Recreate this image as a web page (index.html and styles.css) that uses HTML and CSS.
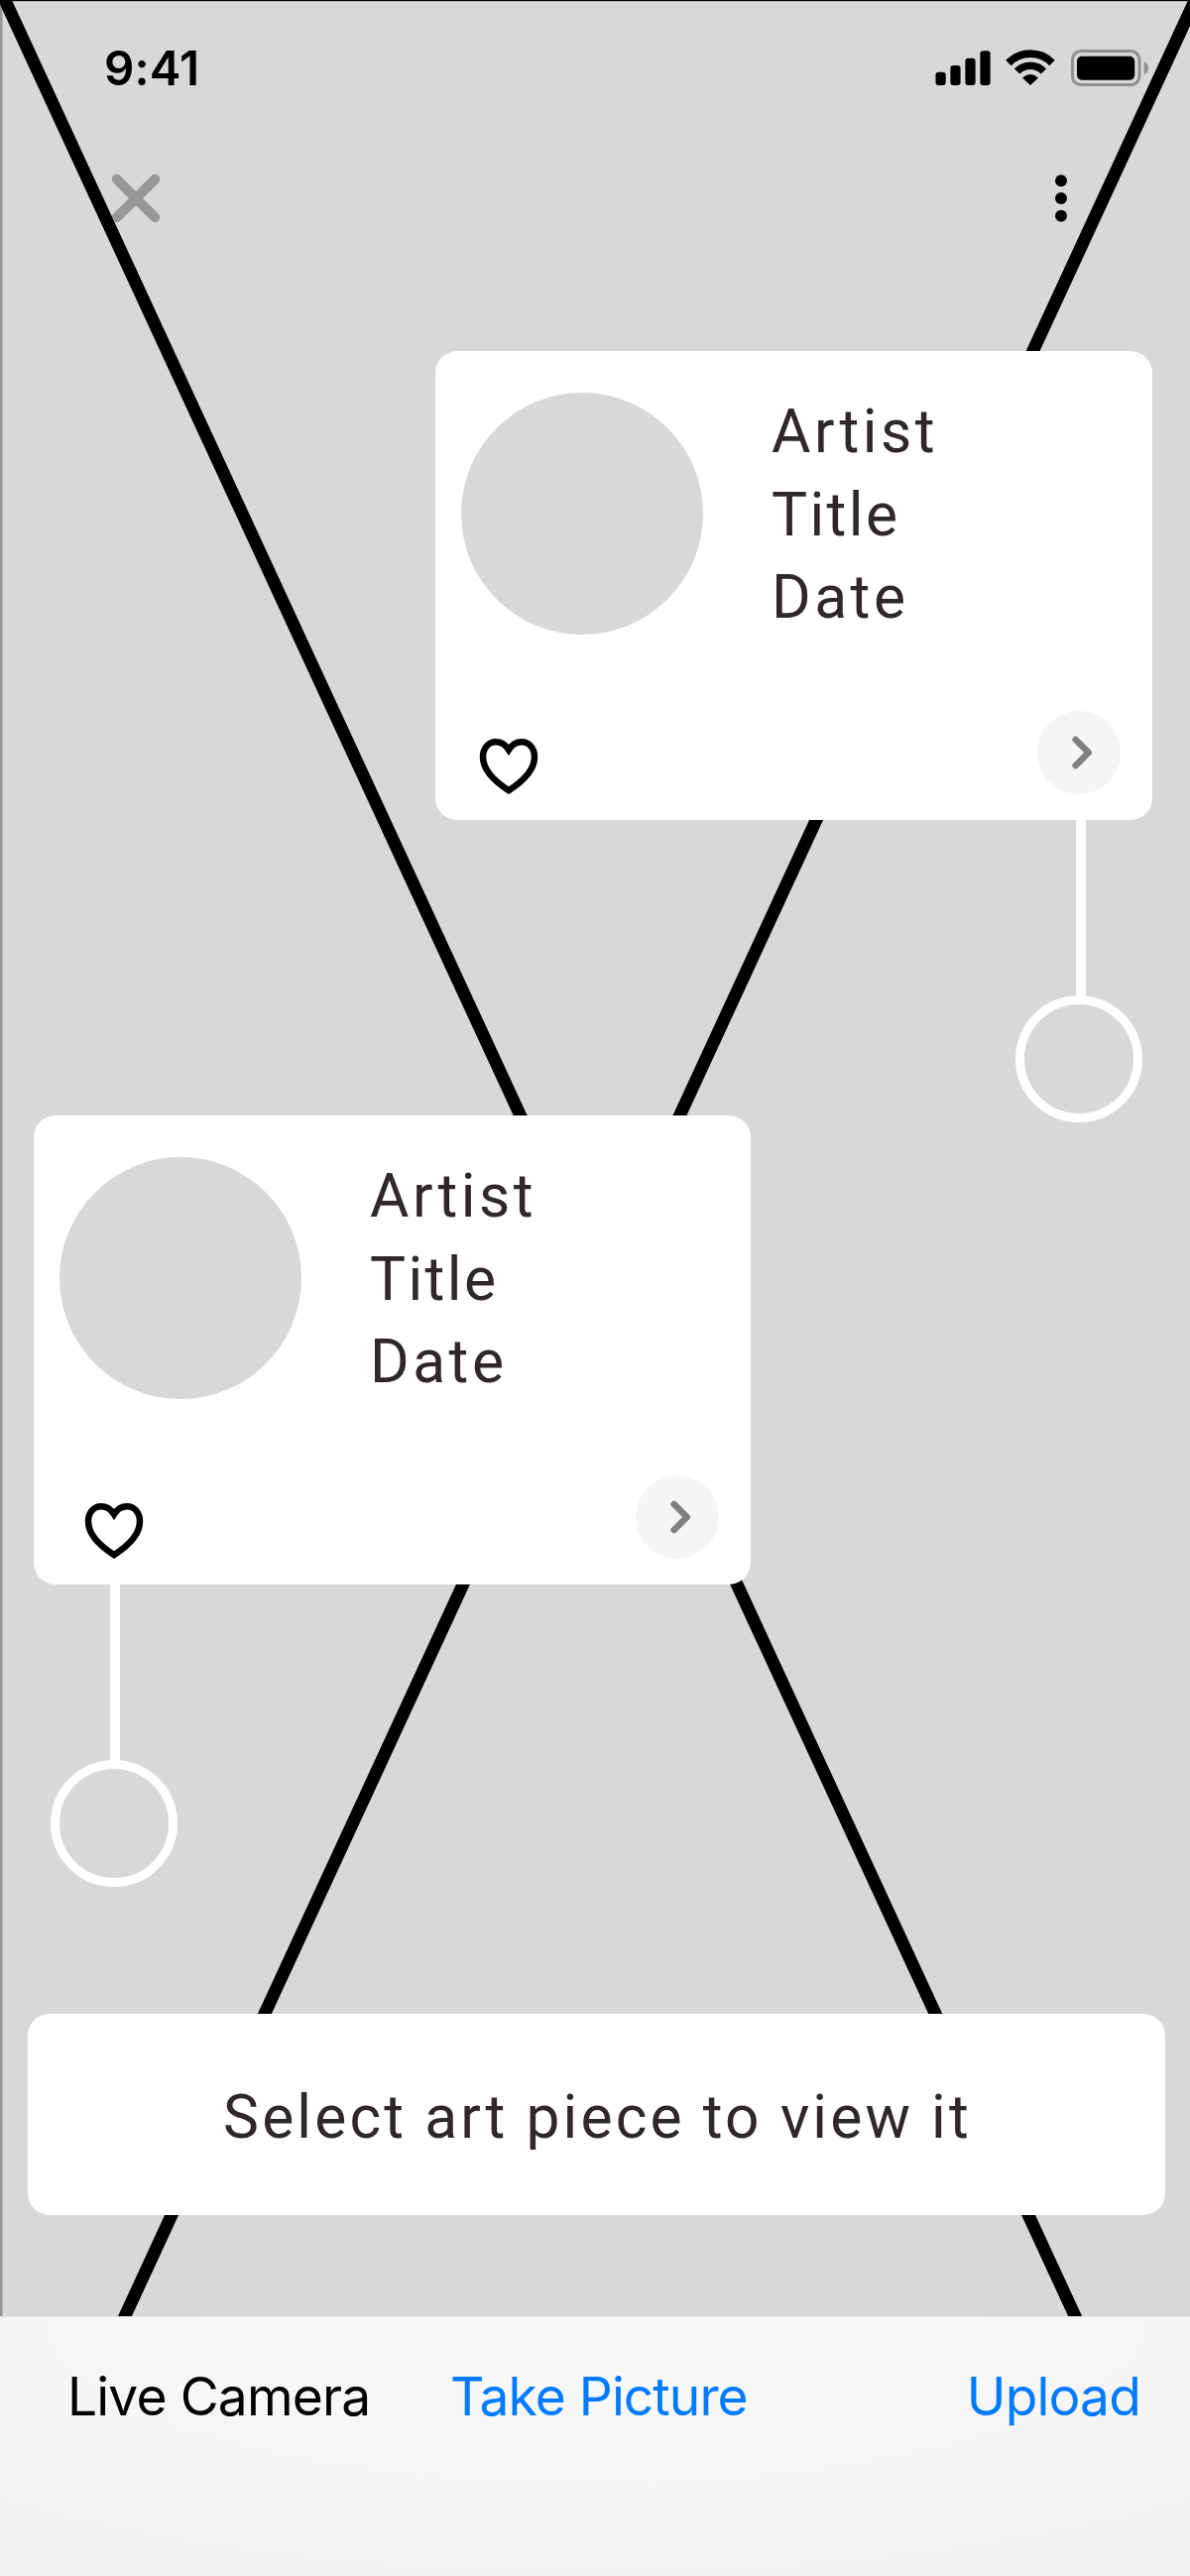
FILE: index.html
```html
<!DOCTYPE html>
<html lang="en">
<head>
<meta charset="utf-8">
<title>Live Camera</title>
<link rel="stylesheet" href="styles.css">
</head>
<body>
<div class="screen">
  <main class="viewfinder">
    <svg class="placeholder" viewBox="0 0 1200 2336" aria-hidden="true">
      <path d="M-4.3 -20 L1093.4 2356 M1214.4 -20 L116.7 2356"/>
    </svg>

    <header class="status-bar">
      <span class="time">9:41</span>
      <svg class="status-icons" width="218" height="40" viewBox="0 0 218 40" aria-hidden="true">
        <rect x="3.5" y="24.7" width="10.2" height="13.3" rx="3"/>
        <rect x="18.4" y="18" width="10.2" height="20" rx="3"/>
        <rect x="33.4" y="10.8" width="10.2" height="27.2" rx="3"/>
        <rect x="48.4" y="3.3" width="10.2" height="34.7" rx="3"/>
        <path class="wifi-arc" d="M77 15.5a30.6 30.6 0 0 1 44 0M85.6 23.9a18.7 18.7 0 0 1 26.8 0"/>
        <path d="M91 30.4Q99 23.6 107 30.4L99 38Z"/>
        <rect class="battery-case" x="141.4" y="3.6" width="67.6" height="34" rx="8.5"/>
        <rect x="146" y="8.8" width="58.2" height="24" rx="5"/>
        <path class="battery-tip" d="M213.6 14.3Q218 16 218 20.8Q218 25.6 213.6 27.3Z"/>
      </svg>
    </header>

    <nav class="nav-bar">
      <svg class="close" width="50" height="50" viewBox="0 0 50 50" aria-label="Close"><path d="M5.7 5.7 44.3 44.3M44.3 5.7 5.7 44.3"/></svg>
      <svg class="more" width="12" height="48" viewBox="0 0 12 48" aria-label="More"><circle cx="6" cy="6.3" r="6"/><circle cx="6" cy="24" r="6"/><circle cx="6" cy="41.7" r="6"/></svg>
    </nav>

    <article class="pin pin-right">
      <div class="card">
        <div class="summary">
          <div class="thumb"></div>
          <div class="details"><span class="artist">Artist</span><span class="title">Title</span><span class="date">Date</span></div>
        </div>
        <div class="actions">
          <svg class="heart" width="60" height="56" viewBox="0 0 60 56" aria-label="Like"><path d="M30 11.2C26.5 5.8 22 3.3 17 3.3 9 3.3 4 10 4 18.5 4 32 15 42.5 30 52.2 45 42.5 56 32 56 18.500 56 10 51 3.300 43 3.300 38 3.300 33.500 5.800 30 11.200Z"/></svg>
          <span class="go"><svg width="84" height="84" viewBox="0 0 84 84" aria-label="Open"><path d="M38.700 29 51.700 42 38.700 55"/></svg></span>
        </div>
      </div>
      <div class="stem"></div>
      <div class="target"></div>
    </article>

    <article class="pin pin-left">
      <div class="card">
        <div class="summary">
          <div class="thumb"></div>
          <div class="details"><span class="artist">Artist</span><span class="title">Title</span><span class="date">Date</span></div>
        </div>
        <div class="actions">
          <svg class="heart" width="60" height="56" viewBox="0 0 60 56" aria-label="Like"><path d="M30 11.200C26.500 5.800 22 3.300 17 3.300 9 3.300 4 10 4 18.500 4 32 15 42.500 30 52.200 45 42.500 56 32 56 18.500 56 10 51 3.300 43 3.300 38 3.300 33.500 5.800 30 11.200Z"/></svg>
          <span class="go"><svg width="84" height="84" viewBox="0 0 84 84" aria-label="Open"><path d="M38.700 29 51.700 42 38.700 55"/></svg></span>
        </div>
      </div>
      <div class="stem"></div>
      <div class="target"></div>
    </article>

    <div class="hint"><span>Select art piece to view it</span></div>
  </main>

  <footer class="toolbar">
    <span class="tab tab-live">Live Camera</span>
    <span class="tab tab-take">Take Picture</span>
    <span class="tab tab-upload">Upload</span>
  </footer>
</div>
</body>
</html>
```

FILE: styles.css
```css
* { box-sizing: border-box; }

body { margin: 0; background: #d8d8d8; }

.screen {
  width: 1200px;
  height: 2598px;
  display: flex;
  flex-direction: column;
  overflow: hidden;
  font-family: Inter, "Liberation Sans", sans-serif;
}

.viewfinder {
  position: relative;
  height: 2336px;
  flex: none;
  display: flex;
  flex-direction: column;
  background: #d8d8d8;
  border-top: 1px solid #000;
  box-shadow: inset 2px 0 #979797, inset 3px 1px #b8b8b8;
}

/* crossed lines of the empty image area */
.placeholder {
  position: absolute;
  top: -1px;
  left: 0;
  width: 1200px;
  height: 2336px;
  fill: none;
  stroke: #000;
  stroke-width: 12.7;
}

.status-bar {
  display: flex;
  justify-content: space-between;
  padding: 47px 42px 0 105px;
  height: 127px;
}
.time {
  font-size: 47.5px;
  font-weight: 600;
  line-height: 42px;
  letter-spacing: 0.1px;
}
.status-icons { display: block; }
.wifi-arc { fill: none; stroke: #000; stroke-width: 7.6; }
.battery-case { fill: none; stroke: #8f8f8f; stroke-width: 3; }
.battery-tip { fill: #8f8f8f; }

.nav-bar {
  display: flex;
  justify-content: space-between;
  align-items: center;
  height: 144px;
  padding: 0 124px 0 112px;
}
.close {
  fill: none;
  stroke: #979797;
  stroke-width: 10;
  stroke-linecap: round;
  mix-blend-mode: darken;
}

/* artwork callouts, placed over the camera picture */
.pin {
  position: absolute;
  width: 723px;
  display: flex;
  flex-direction: column;
}
.pin-right { left: 439px; top: 353px; }
.pin-left { left: 34px; top: 1124px; }

.card {
  height: 473px;
  border-radius: 22px;
  background: #fff;
  padding: 42px 36px 26px 26px;
  display: flex;
  flex-direction: column;
  justify-content: space-between;
}
.summary { display: flex; gap: 69px; }
.thumb {
  width: 244px;
  height: 244px;
  border-radius: 50%;
  background: #d8d8d8;
}
.details {
  display: flex;
  flex-direction: column;
  margin-top: -2px;
  font-family: Roboto, sans-serif;
  font-size: 60.5px;
  line-height: 83.5px;
  color: #2e2829;
}
.artist { letter-spacing: 3.5px; }
.title { letter-spacing: 2.4px; }
.date { letter-spacing: 3.5px; }
.actions {
  display: flex;
  justify-content: space-between;
  align-items: flex-end;
}
.heart { fill: none; stroke: #000; stroke-width: 6.5; }
.pin-right .heart { margin-left: 18px; }
.pin-left .heart { margin-left: 25px; }
.go {
  width: 84px;
  height: 84px;
  border-radius: 50%;
  background: #f5f5f5;
  display: flex;
  margin-right: -4px;
}
.go svg {
  fill: none;
  stroke: #808080;
  stroke-width: 6.7;
  stroke-linecap: round;
  stroke-linejoin: round;
}
.stem { width: 10px; height: 178px; background: #fff; }
.target {
  width: 128px;
  height: 128px;
  margin-top: -1px;
  border: 9.5px solid #fff;
  border-radius: 50%;
}
.pin-right .stem { margin-left: 646px; }
.pin-right .target { margin-left: 585px; }
.pin-left .stem { margin-left: 77px; }
.pin-left .target { margin-left: 17px; }

.hint {
  margin: auto 25px 102px 28px;
  height: 203px;
  padding: 6px 0 0 2px;
  border-radius: 22px;
  background: #fff;
  position: relative;
  display: flex;
  justify-content: center;
  align-items: center;
  font-family: Roboto, sans-serif;
  font-size: 60.5px;
  letter-spacing: 3.13px;
  color: #2e2829;
}

.toolbar {
  flex: 1;
  display: flex;
  align-items: flex-start;
  padding: 48px 50px 0 68px;
  border-top: 1px solid #e8e8e8;
  background: radial-gradient(ellipse 1100px 330px at 50% 0, #f8f8f8 20%, #f1f1f1 100%);
  font-size: 53.3px;
  line-height: 64px;
  letter-spacing: -0.85px;
  color: #007aff;
}
.tab { white-space: nowrap; }
.tab-live { color: #000; width: 386px; }
.tab-take { letter-spacing: -0.95px; }
.tab-upload { margin-left: auto; }
```
